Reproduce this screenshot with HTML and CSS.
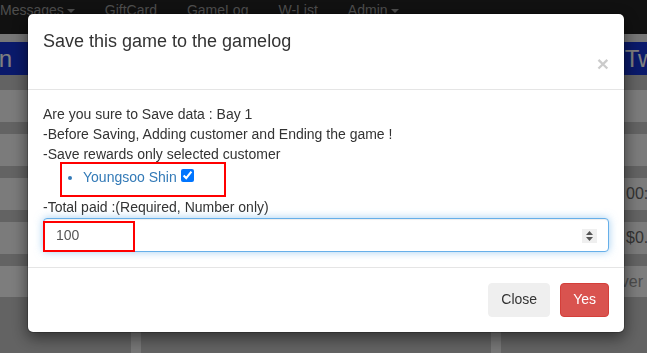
FILE: index.html
```html
<!DOCTYPE html>
<html lang="en">
<head>
  <meta charset="UTF-8" />
  <title>Bay Manager</title>
  <link rel="stylesheet" href="styles.css">
</head>
<body>

  <nav class="topbar">
    <ul class="nav-links">
      <li>Messages<span class="caret"></span></li>
      <li>GiftCard</li>
      <li>GameLog</li>
      <li>W-List</li>
      <li>Admin<span class="caret"></span></li>
    </ul>
  </nav>

  <main class="bays">
    <section class="bay">
      <h2 class="bay-title">Simulation</h2>
      <div class="bay-body">
        <div class="bay-row"><span class="row-label">Player</span><span class="row-value"></span></div>
        <div class="bay-row"><span class="row-label">Start</span><span class="row-value"></span></div>
        <div class="bay-row"><span class="row-label">Time</span><span class="row-value">00:00:00</span></div>
        <div class="bay-row"><span class="row-label">Paid</span><span class="row-value">$0.00</span></div>
        <div class="server-box">Choose a Server</div>
      </div>
    </section>
    <section class="bay">
      <h2 class="bay-title">Bay 1</h2>
      <div class="bay-body">
        <div class="bay-row"><span class="row-label">Player</span><span class="row-value"></span></div>
        <div class="bay-row"><span class="row-label">Start</span><span class="row-value"></span></div>
        <div class="bay-row"><span class="row-label">Time</span><span class="row-value">00:00:00</span></div>
        <div class="bay-row"><span class="row-label">Paid</span><span class="row-value">$0.00</span></div>
        <div class="server-box">Choose a Server</div>
      </div>
    </section>
    <section class="bay">
      <h2 class="bay-title">Twosome</h2>
      <div class="bay-body">
        <div class="bay-row"><span class="row-label">Player</span><span class="row-value"></span></div>
        <div class="bay-row"><span class="row-label">Start</span><span class="row-value"></span></div>
        <div class="bay-row"><span class="row-label">Time</span><span class="row-value">00:00:00</span></div>
        <div class="bay-row"><span class="row-label">Paid</span><span class="row-value">$0.00</span></div>
        <div class="server-box">Choose a Server</div>
      </div>
    </section>
  </main>

  <div class="backdrop"></div>

  <div class="modal">
    <div class="modal-content">
      <div class="modal-header">
        <h4 class="modal-title">Save this game to the gamelog</h4>
        <button type="button" class="close">&times;</button>
      </div>

      <div class="modal-body">
        <div class="confirm-text">
          Are you sure to Save data : Bay 1<br>
          -Before Saving, Adding customer and Ending the game !<br>
          -Save rewards only selected customer
        </div>
        <ul class="customer-list">
          <li>
            <a href="#">Youngsoo Shin</a> <input type="checkbox" checked>
            <span class="mark mark-customer"></span>
          </li>
        </ul>
        <label class="paid-label" for="paid">-Total paid :(Required, Number only)</label>
        <div class="paid-field">
          <input type="number" id="paid" class="paid-input" value="100">
          <span class="spinner">
            <svg width="15" height="14" viewBox="0 0 15 14">
              <path d="M4 6h7L7.5 2z" fill="#555"/>
              <path d="M4 8h7l-3.5 4z" fill="#555"/>
            </svg>
          </span>
          <span class="mark mark-paid"></span>
        </div>
      </div>

      <div class="modal-footer">
        <button type="button" class="btn btn-close">Close</button>
        <button type="button" class="btn btn-yes">Yes</button>
      </div>
    </div>
  </div>

</body>
</html>
```

FILE: styles.css
```css
* {
  box-sizing: border-box;
}

body {
  margin: 0;
  height: 100vh;
  overflow: hidden;
  font-family: "Liberation Sans", Arial, sans-serif;
  font-size: 14px;
  line-height: 1.42857;
  color: #333;
  background-color: #eee;
}

/* top navigation */
.topbar {
  height: 34px;
  background-color: #222;
}

.nav-links {
  display: flex;
  list-style: none;
  margin: 0 0 0 -15px;
  padding: 0;
}

.nav-links li {
  padding: 0 15px;
  line-height: 20px;
  color: #9d9d9d;
}

.caret {
  display: inline-block;
  margin-left: 3px;
  vertical-align: middle;
  border-top: 4px solid;
  border-left: 4px solid transparent;
  border-right: 4px solid transparent;
}

/* bay cards behind the dialog */
.bays {
  display: grid;
  grid-template-columns: repeat(3, 350px);
  gap: 10px;
  margin-left: -219px;
  padding-top: 8px;
}

.bay {
  height: calc(100vh - 42px);
  background-color: #c6c6c6;
}

.bay-title {
  margin: 0;
  height: 33px;
  background-color: #1433d6;
  color: #fff;
  font-size: 24px;
  font-weight: normal;
  line-height: 33px;
  text-align: center;
}

.bay-body {
  display: flex;
  flex-direction: column;
  gap: 12px;
  padding: 15px 10px 0;
}

.bay-row {
  display: flex;
  align-items: center;
  height: 32px;
  padding: 0 10px;
  background-color: #f7f7f7;
  font-size: 16px;
  color: #666;
}

.row-label {
  width: 105px;
  color: #999;
}

.server-box {
  height: 31px;
  padding: 0 12px;
  background-color: #fafafa;
  font-size: 16px;
  line-height: 31px;
  color: #999;
}

/* dialog */
.backdrop {
  position: fixed;
  inset: 0;
  background-color: rgba(0, 0, 0, 0.5);
}

.modal {
  position: fixed;
  inset: 0;
  padding: 13px 0 0 27px;
}

.modal-content {
  width: 598px;
  background-color: #fff;
  background-clip: padding-box;
  border: 1px solid rgba(0, 0, 0, 0.2);
  border-radius: 6px;
  box-shadow: 0 5px 15px rgba(0, 0, 0, 0.5);
}

.modal-header {
  display: flex;
  flex-direction: column;
  padding: 15px;
  border-bottom: 1px solid #e5e5e5;
}

.modal-title {
  margin: 0;
  font-size: 18px;
  font-weight: normal;
  line-height: 1.42857;
}

.close {
  align-self: flex-end;
  margin-top: -2px;
  padding: 0;
  height: 21px;
  background: none;
  border: 0;
  font-family: inherit;
  font-size: 21px;
  font-weight: bold;
  line-height: 1;
  color: #000;
  opacity: 0.2;
  text-shadow: 0 1px 0 #fff;
}

.modal-body {
  padding: 15px;
}

.customer-list {
  margin: 0 0 10px;
  padding-left: 40px;
  color: #337ab7;
}

.customer-list li {
  position: relative;
}

.customer-list a {
  color: #337ab7;
  text-decoration: none;
}

.customer-list input[type="checkbox"] {
  margin: 4px 0 0;
  line-height: normal;
}

.paid-label {
  display: block;
  font-weight: normal;
}

.paid-field {
  position: relative;
}

.paid-input {
  display: block;
  width: 100%;
  height: 34px;
  padding: 6px 12px;
  font-family: inherit;
  font-size: 14px;
  line-height: 1.42857;
  color: #555;
  background-color: #fff;
  border: 1px solid #66afe9;
  border-radius: 4px;
  outline: 0;
  box-shadow: inset 0 1px 1px rgba(0, 0, 0, 0.075), 0 0 8px rgba(102, 175, 233, 0.6);
}

.paid-input::-webkit-inner-spin-button,
.paid-input::-webkit-outer-spin-button {
  -webkit-appearance: none;
  margin: 0;
}

.spinner {
  position: absolute;
  top: 11px;
  right: 12px;
  width: 15px;
  height: 14px;
  background-color: #efefef;
}

.spinner svg {
  display: block;
}

/* red highlight boxes drawn over the form */
.mark {
  position: absolute;
  border: 2px solid #f00;
  pointer-events: none;
}

.mark-customer {
  left: -23px;
  top: -3px;
  width: 166px;
  height: 35px;
}

.mark-paid {
  left: 0;
  top: 3px;
  width: 92px;
  height: 31px;
}

.modal-footer {
  display: flex;
  justify-content: flex-end;
  gap: 10px;
  padding: 15px;
  border-top: 1px solid #e5e5e5;
}

.btn {
  padding: 6px 12px;
  font-family: inherit;
  font-size: 14px;
  line-height: 1.42857;
  border: 1px solid transparent;
  border-radius: 4px;
  cursor: pointer;
}

.btn-close {
  color: #333;
  background-color: #efefef;
  border-color: #efefef;
}

.btn-yes {
  color: #fff;
  background-color: #d9534f;
  border-color: #d43f3a;
}
```
